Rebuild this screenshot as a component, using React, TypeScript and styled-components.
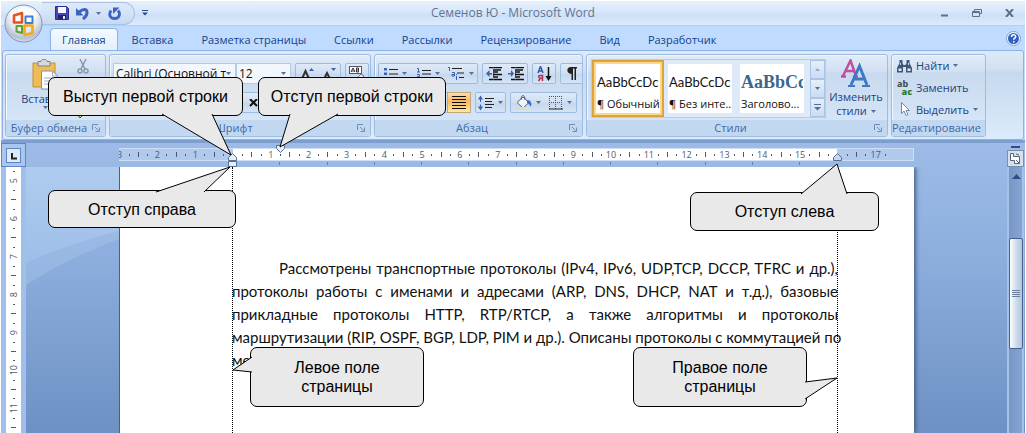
import React from 'react';
import styled, { createGlobalStyle, css } from 'styled-components';
import { Bold, Italic, Strikethrough, Underline } from 'lucide-react';

const Global = createGlobalStyle`
  *, *::before, *::after { box-sizing: border-box; }
  body { margin: 0; background: #fff; font-family: "Open Sans", "Noto Sans", sans-serif; font-size: 11px; color: #1f3f7f; }
  button, select { font: inherit; color: inherit; margin: 0; }
  svg { display: block; flex: none; }
`;

const ui = { line: '#9ebbe0', frame: '#8db2e3', navy: '#1f3f7f', label: '#3e6aaa' };

/* ---------- window ---------- */

const Window = styled.div`
  position: relative;
  display: flex;
  flex-direction: column;
  min-height: 100vh;
  margin: 0 1px;
  overflow: hidden;
  background: #bfdbff;
`;

const TitleBar = styled.header`
  display: grid;
  grid-template-columns: 1fr auto 1fr;
  align-items: center;
  height: 26px;
  border-top: 1px solid #fff;
  background: linear-gradient(#e6f0fc, #d9e8fb 40%, #cde0f8 60%, #dcebfd);
  border-bottom: 1px solid #b3d0f3;
`;

const QuickAccess = styled.div`
  display: flex;
  align-items: center;
  gap: 7px;
  padding-left: 41px;
`;

const QuickPill = styled.div`
  display: flex;
  align-items: center;
  gap: 7px;
  width: 93px;
  height: 23px;
  padding-left: 13px;
  border: 1px solid #a9c3e6;
  border-left: 0;
  border-radius: 0 12px 12px 0;
  background: linear-gradient(#dfeafa, #c7daf3);
`;

const PlainButton = styled.button`
  display: flex;
  align-items: center;
  justify-content: center;
  padding: 0;
  border: 0;
  background: none;
`;

const Title = styled.h1`
  margin: 0;
  font-size: 12px;
  line-height: 16px;
  font-weight: 400;
  color: #5e7491;
`;

const WindowButtons = styled.div`
  display: flex;
  justify-content: flex-end;
  gap: 16px;
  padding-right: 8px;
`;

const WindowButton = styled(PlainButton)`
  width: 16px;
  height: 16px;
`;

const Orb = styled.button`
  position: absolute;
  left: 3px;
  top: 4px;
  width: 39px;
  height: 39px;
  padding: 0;
  border: 0;
  background: none;
`;

const TabBar = styled.nav`
  display: flex;
  align-items: stretch;
  height: 25px;
  padding: 2px 4px 0 49px;
  background: #bfdbff;
`;

const Tab = styled.button<{ $active?: boolean }>`
  padding: 0 13px;
  border: 1px solid transparent;
  border-bottom: 0;
  border-radius: 4px 4px 0 0;
  background: none;
  font-size: 11px;
  line-height: 16px;
  color: #15428b;
  white-space: nowrap;
  ${p => p.$active && css`
    padding: 0 11px;
    border-color: ${ui.frame};
    background: linear-gradient(#f4f9ff, #e3eefb);
  `}
`;

const Help = styled(PlainButton)`
  margin-left: auto;
  width: 16px;
  height: 20px;
`;

/* ---------- ribbon ---------- */

const RibbonBar = styled.div`
  display: flex;
  gap: 3px;
  height: 90px;
  margin: -1px 1px 0;
  padding: 3px 2px 2px;
  border: 1px solid ${ui.frame};
  border-radius: 3px;
  background: linear-gradient(#dfeaf8, #cfdff2 22%, #c7d9ef 24%, #dcebfb);
`;

const GroupBox = styled.section<{ $w: number }>`
  display: flex;
  flex-direction: column;
  flex: 0 0 ${p => p.$w}px;
  border: 1px solid ${ui.line};
  border-radius: 3px;
  background: linear-gradient(#e2ecf8, #d2e0f2 20%, #c9daef 22%, #d9e8f9);
  box-shadow: inset 1px 1px 0 #eff6fd;
  overflow: hidden;
`;

const GroupBody = styled.div`
  flex: 1;
  display: flex;
  min-height: 0;
`;

const GroupFooter = styled.footer`
  display: flex;
  align-items: center;
  height: 16px;
  padding-right: 5px;
  background: #c2d8f0;
  color: ${ui.label};
  line-height: 14px;
`;

const GroupName = styled.span`
  flex: 1;
  text-align: center;
  white-space: nowrap;
`;

const Stack = styled.div`
  display: flex;
  flex-direction: column;
  gap: 8px;
  padding: 8px 3px 0;
`;

const Line = styled.div`
  display: flex;
  gap: 4px;
  height: 21px;
`;

const ButtonSet = styled.div`
  display: flex;
  border: 1px solid ${ui.line};
  border-radius: 2px;
  background: linear-gradient(#dfeaf7, #cfdef1 50%, #c5d7ee 52%, #d5e4f6);
  > * + * { border-left: 1px solid #b9cfea; }
`;

const Tool = styled.button<{ $w?: number; $on?: boolean }>`
  display: flex;
  align-items: center;
  justify-content: center;
  gap: 4px;
  width: ${p => p.$w ?? 22}px;
  padding: 0;
  border: 0;
  background: none;
  color: #111;
  ${p => p.$on && css`
    outline: 1px solid #c2a978;
    background: linear-gradient(#fbdbb0, #fdb85e 45%, #fdc770 60%, #fee9a0);
  `}
`;

const SelectBox = styled.div<{ $w: number }>`
  display: flex;
  align-items: center;
  width: ${p => p.$w}px;
  padding-right: 4px;
  border: 1px solid #b3cbe8;
  background: #f2f7fd;
`;

const Select = styled.select`
  flex: 1;
  min-width: 0;
  height: 19px;
  padding: 0 0 0 2px;
  border: 0;
  background: none;
  appearance: none;
  font-size: 12px;
  color: #111;
  overflow: hidden;
`;

const Combos = styled.div`
  display: flex;
`;

const BigButton = styled.button<{ $w: number; $inset?: number }>`
  display: flex;
  flex-direction: column;
  align-items: center;
  width: ${p => p.$w}px;
  padding: 4px 0 0 ${p => p.$inset ?? 0}px;
  border: 0;
  background: none;
  line-height: 14px;
  color: ${ui.navy};
`;

const BigLabel = styled.span`
  margin-top: 2px;
`;

const CaretLabel = styled.span`
  display: flex;
  align-items: center;
  gap: 4px;
`;

const SmallColumn = styled.div`
  display: flex;
  flex-direction: column;
  gap: 8px;
  padding: 4px 2px;
`;

const Gallery = styled.div`
  display: flex;
  height: 59px;
  margin: 4px 0 0 4px;
  border: 1px solid #b6cdea;
  background: #dfeaf8;
`;

const StyleCard = styled.button<{ $on?: boolean }>`
  display: flex;
  flex-direction: column;
  justify-content: flex-end;
  width: 72px;
  padding: 0 1px;
  border: 4px solid transparent;
  background: #fff padding-box;
  text-align: left;
  color: #111;
  overflow: hidden;
  ${p => p.$on && css`
    border: 2px solid #e0a23c;
    padding: 0 3px 2px;
    background: #fff;
    box-shadow: inset 0 0 0 2px #fbd98b;
  `}
`;

const Sample = styled.span<{ $heading?: boolean }>`
  width: 100%;
  font-family: Lato, sans-serif;
  font-size: 13px;
  line-height: 24px;
  white-space: nowrap;
  overflow: hidden;
  ${p => p.$heading && css`
    font-family: "Liberation Serif", serif;
    font-size: 18px;
    font-weight: 700;
    color: #3b6690;
  `}
`;

const StyleName = styled.span`
  line-height: 19px;
  white-space: nowrap;
`;

const Scroller = styled.div`
  display: flex;
  flex-direction: column;
  width: 15px;
  margin-left: 2px;
`;

const ScrollKey = styled(PlainButton)`
  flex: 1;
  border: 1px solid #a9c4e6;
  background: linear-gradient(#e6eff9, #cbdcf1);
`;

const EditList = styled.div`
  display: flex;
  flex-direction: column;
  padding-left: 5px;
`;

const EditButton = styled.button`
  display: flex;
  align-items: center;
  gap: 4px;
  height: 22px;
  padding: 0;
  border: 0;
  background: none;
  color: ${ui.navy};
`;

/* ---------- rulers and document ---------- */

const Workspace = styled.main`
  flex: 1;
  display: flex;
  border-top: 3px solid #7d9fd0;
  background: linear-gradient(#9dbbe6, #8fb0df 35%, #6d91c4);
`;

const LeftRail = styled.div`
  display: flex;
  flex-direction: column;
  width: 25px;
  background: #a0bfea;
`;

const TabSelector = styled.button`
  display: flex;
  align-items: center;
  justify-content: center;
  height: 24px;
  padding: 0;
  border: 1px solid #5f86c4;
  background: #a9c6ee;
`;

const VerticalRuler = styled.div`
  flex: 1 0 0;
  min-height: 0;
  margin: 0 5px;
  overflow: hidden;
  background: #fff;
`;

const VerticalScale = styled.div`
  margin-top: -10px;
`;

const VerticalCell = styled.div`
  display: grid;
  grid-template-rows: repeat(4, 1fr);
  place-items: center;
  height: 38px;
`;

const VerticalNumber = styled.span`
  writing-mode: vertical-rl;
  transform: rotate(180deg);
  font-size: 9px;
  line-height: 12px;
  color: #4b5a72;
`;

const Mark = styled.i<{ $w: number; $h: number }>`
  width: ${p => p.$w}px;
  height: ${p => p.$h}px;
  background: #4b5a72;
`;

const Desk = styled.div`
  position: relative;
  flex: 1;
  min-width: 0;
  display: flex;
  flex-direction: column;
  align-items: center;
`;

const Swoosh = styled.svg`
  position: absolute;
  left: 0;
  top: 24px;
`;

const PageWidth = styled.div`
  position: relative;
  width: 100%;
  max-width: 795px;
`;

const RulerArea = styled(PageWidth)`
  height: 24px;
  padding-top: 5px;
`;

const Ruler = styled.div`
  height: 13px;
  overflow: hidden;
  border: solid #cfe0f6;
  border-width: 1px 1px 1px 0;
  background: linear-gradient(90deg, #b0c9ec 114px, #fff 114px, #fff calc(100% - 76px), #b0c9ec calc(100% - 76px));
`;

const Scale = styled.div`
  display: grid;
  grid-template-columns: repeat(21, 1fr);
  width: 794px;
  height: 11px;
  margin-left: -23px;
`;

const ScaleCell = styled.div`
  display: grid;
  grid-template-columns: repeat(4, 1fr);
  place-items: center;
`;

const ScaleNumber = styled.span`
  font-size: 9px;
  line-height: 11px;
  color: #4b5a72;
`;

const TabStops = styled.div`
  display: grid;
  grid-template-columns: repeat(12, 1fr);
  width: 567px;
  height: 3px;
  margin: 1px 0 0 114px;
  > i { border-right: 1px solid #6480ad; }
`;

const IndentMarker = styled.svg<{ $x: number; $y: number }>`
  position: absolute;
  left: ${p => p.$x}px;
  top: ${p => p.$y}px;
`;

const Sheet = styled(PageWidth)`
  flex: 1;
  display: flex;
  padding: 0 76px 0 112px;
  border-left: 1px solid #47618d;
  background: #fff;
  box-shadow: 2px 0 4px #47618d;
  clip-path: inset(0 -8px 0 0);
`;

const TextArea = styled.article`
  flex: 1;
  min-width: 0;
  padding-top: 90px;
  border: dotted #000;
  border-width: 0 1px;
`;

const TextLine = styled.p<{ $indent?: boolean; $last?: boolean }>`
  margin: 0 -1px;
  padding-left: ${p => (p.$indent ? 47 : 0)}px;
  font-family: Lato, "Noto Sans", sans-serif;
  font-size: 15px;
  line-height: 23px;
  color: #111;
  white-space: nowrap;
  text-align-last: ${p => (p.$last ? 'left' : 'justify')};
`;

const ScrollRail = styled.div`
  display: flex;
  flex-direction: column;
  width: 18px;
  padding-right: 1px;
`;

const SplitHandle = styled.div`
  height: 5px;
  margin: 0 4px;
  border-bottom: 2px solid #2c4d87;
`;

const RulerToggle = styled(PlainButton)`
  height: 17px;
  margin-top: 2px;
  border: 1px solid #7a8fae;
  background: #d7e0ec;
`;

const ScrollTrack = styled.div`
  flex: 1;
  display: flex;
  flex-direction: column;
  align-items: center;
  padding: 7px 1px 0 2px;
  background: linear-gradient(90deg, #a5c3ea 2px, #7796c4 2px, #86a5d2 15px, #a5c3ea 15px);
`;

const Thumb = styled.div`
  display: flex;
  align-items: center;
  justify-content: center;
  width: 14px;
  height: 111px;
  margin-top: 59px;
  border: 1px solid #47618d;
  border-radius: 2px;
  background: linear-gradient(90deg, #fff, #cfdded 50%, #b3c6de);
`;

/* ---------- callouts ---------- */

const CalloutLayer = styled.div`
  position: absolute;
  left: 50%;
  top: 0;
  width: 1026px;
  margin-left: -513px;
  pointer-events: none;
`;

const CalloutBox = styled.div<{ $x: number; $y: number; $w: number; $h: number }>`
  position: absolute;
  left: ${p => p.$x}px;
  top: ${p => p.$y}px;
  width: ${p => p.$w}px;
  height: ${p => p.$h}px;
  display: flex;
  align-items: center;
  justify-content: center;
  border: 1px solid #000;
  border-radius: 7px;
  background: #e9e9e9;
  font-family: "Liberation Sans", Arial, sans-serif;
  font-size: 16px;
  line-height: 19px;
  text-align: center;
  color: #000;
  white-space: pre-line;
`;

const Tail = styled.svg`
  position: absolute;
  left: -1px;
  top: -1px;
  overflow: visible;
`;

type CalloutProps = { x: number; y: number; w: number; h: number; tail: string; children: string };

function Callout({ x, y, w, h, tail, children }: CalloutProps) {
  return (
    <CalloutBox $x={x} $y={y} $w={w} $h={h}>
      <Tail width={w} height={h} aria-hidden="true">
        <path d={tail} fill="#e9e9e9" stroke="#000" />
      </Tail>
      {children}
    </CalloutBox>
  );
}

/* ---------- icons ---------- */

const Caret = ({ c = '#54709c' }: { c?: string }) => (
  <svg width="5" height="3"><path d="M0 0h5L2.500 3z" fill={c} /></svg>
);

const Launcher = () => (
  <svg width="8" height="8" fill="none" stroke="#6c8cb9">
    <path d="M.5 6V.5H6M3 3l3.500 3.500M7.500 3.500v4h-4" />
  </svg>
);

const OfficeOrb = () => (
  <svg width="39" height="39" viewBox="0 0 39 39">
    <defs>
      <radialGradient id="orb" cx=".5" cy=".3" r=".75">
        <stop offset="0" stopColor="#fff" /><stop offset=".55" stopColor="#e3e8f0" />
        <stop offset=".8" stopColor="#b5bfd0" /><stop offset="1" stopColor="#eef3fa" />
      </radialGradient>
    </defs>
    <circle cx="19.500" cy="19.500" r="18.500" fill="url(#orb)" stroke="#8397b5" />
    <ellipse cx="19.500" cy="11" rx="14" ry="8" fill="#fff" opacity=".6" />
    <g fill="none" strokeWidth="2.600" strokeLinejoin="round">
      <path d="M10 11.500l8-2.500v9.500h-8z" stroke="#e5541b" />
      <path d="M21.500 12.500h7v6.500h-7z" stroke="#3f7fd0" strokeWidth="2" />
      <path d="M12.500 22h5.500v7l-5.500-1.500z" stroke="#5da331" strokeWidth="2" />
      <path d="M20.500 21.500h8v7.500l-8 2z" stroke="#f2a91c" />
    </g>
  </svg>
);

const SaveIcon = () => (
  <svg width="14" height="14">
    <path d="M.5.5h11l2 2v11H.5z" fill="#4646b4" stroke="#2e2e88" />
    <path d="M3 1h8v6H3z" fill="#f4f7ff" /><path d="M3 9h8v4.500H3z" fill="#23236e" /><path d="M8 10h2v3H8z" fill="#e3e8fa" />
  </svg>
);

const UndoIcon = () => (
  <svg width="13" height="13" fill="none" stroke="#3c63c4" strokeWidth="3">
    <path d="M3 5c5-4 8-3 8 .5 0 3-2 5-4 6.500" /><path d="M0 1v7.500h7.500z" fill="#3c63c4" stroke="none" />
  </svg>
);

const RedoIcon = () => (
  <svg width="13" height="13" fill="none" stroke="#3c63c4" strokeWidth="2.800">
    <path d="M10 3.500C13 7 11 11.500 6.500 11.500s-6-4-3.500-8" /><path d="M5 .5h6.500L5 7z" fill="#3c63c4" stroke="none" />
  </svg>
);

const HelpIcon = () => (
  <svg width="15" height="15">
    <circle cx="7.500" cy="7.500" r="7" fill="#f5f9ff" stroke="#7f9fd0" />
    <circle cx="7.500" cy="7.500" r="5.500" fill="#2f62c0" />
    <path d="M5.500 6c0-3 4.200-2.800 4.200-.3 0 1.400-2 1.500-2 3" fill="none" stroke="#fff" strokeWidth="1.500" />
    <path d="M7 10h1.500v1.500H7z" fill="#fff" />
  </svg>
);

const PasteIcon = () => (
  <svg width="27" height="31">
    <path d="M1 4h22v24H1z" fill="#f0bc58" stroke="#c98f2e" />
    <path d="M6 2.500h3c0-3 6-3 6 0h3V7H6z" fill="#d6d9df" stroke="#7c838f" />
    <path d="M9.500 12h11l5 5v13h-16z" fill="#fff" stroke="#7f8fae" />
    <path d="M20.500 12v5h5M12 19h10M12 22h10M12 25h10" fill="none" stroke="#9aabc9" />
  </svg>
);

const CutIcon = () => (
  <svg width="12" height="15" fill="none" stroke="#8a97ab" strokeWidth="1.500">
    <path d="M3 0l5 10M9 0L4 10" /><circle cx="3" cy="12" r="2" /><circle cx="9" cy="12" r="2" />
  </svg>
);

const CopyIcon = () => (
  <svg width="13" height="14" fill="#eef3fa" stroke="#8a97ab"><path d="M.5.5h7v9h-7zM5.500 4.500h7v9h-7z" /></svg>
);

const BrushIcon = () => (
  <svg width="14" height="14"><path d="M9 1l3 3-4 4-3-3z" fill="#d5a53c" /><path d="M4 6l4 4-4 4-3-4z" fill="#f3d58a" stroke="#5b4a1e" /></svg>
);

const BigA = ({ down }: { down?: boolean }) => (
  <svg width="15" height="14">
    <path d={down ? 'M1 14l4-8 4 8M2.500 12h5' : 'M1 14L5.500 4 10 14M3 11h5'} fill="none" stroke="#333" strokeWidth="2" />
    <path d={down ? 'M9 1h5l-2.500 3z' : 'M9 4h5l-2.500-3z'} fill="#3a62ac" />
  </svg>
);

const ClearFormat = () => (
  <svg width="16" height="16" fill="none" stroke="#333">
    <rect x=".5" y=".5" width="12" height="7" fill="#fff" stroke="#556" />
    <path d="M2 6l2-4 2 4M2.500 5h3M7.500 2v4h2V2zM7.500 4h2" /><path d="M8 12l4-4 3 2-4 5z" fill="#f1dfe9" stroke="#777" />
  </svg>
);

const Bullets = () => (
  <svg width="14" height="14">
    <path d="M0 1h3v2.500H0zM0 5.500h3V8H0zM0 10h3v2.500H0z" fill="#3a62ac" /><path d="M5 2.500h9M5 7h9M5 11.500h9" stroke="#222" />
  </svg>
);

const Numbering = () => (
  <svg width="14" height="14" fill="none">
    <path d="M0 1.500h1.500V5M0 5h3M0 7.500h2.500v2H.5v2H3" stroke="#3a62ac" /><path d="M5 3.500h9M5 7h9M5 10.500h9" stroke="#222" />
  </svg>
);

const Multilevel = () => (
  <svg width="17" height="15" fill="none">
    <path d="M0 1.500h1.500V5M4 6.500h2.500v3.500H4V8.500h2.500M8.500 10v4M8.500 8v1" stroke="#3a62ac" />
    <path d="M4 2.500h10M9 7h7M11 11.500h5" stroke="#222" />
  </svg>
);

const Indent = ({ right }: { right?: boolean }) => (
  <svg width="16" height="14">
    <path d="M3 .5h13M7 3h8M7 5h5M7 7.500h9M7 10h5M3 12.500h13" stroke="#111" strokeWidth="1.500" />
    <path d={right ? 'M0 6h3V3l3 3.500L3 10V7.500H0z' : 'M6 6H3.500V3L0 6.500 3.500 10V7.500H6z'} fill="#3a62ac" />
    <path d="M7.500 0v14" stroke="#444" strokeDasharray="1 1" />
  </svg>
);

const Sort = () => (
  <svg width="15" height="16" fill="none">
    <path d="M1 7l2.500-6.500L6 7M2 5h3" stroke="#3658a8" strokeWidth="1.500" />
    <path d="M5.500 15V9.500H3.200c-2 0-2 2.700 0 2.700H5.500M3.500 12L1.500 15" stroke="#a8344e" strokeWidth="1.500" />
    <path d="M11.500 1v12" stroke="#111" strokeWidth="1.500" /><path d="M8.500 10h6l-3 5z" fill="#111" />
  </svg>
);

const Pilcrow = () => (
  <svg width="10" height="13"><path d="M10 0v1.500H9V13H7.500V1.500H6V13H4.500V7C-1 7-1 0 4 0z" fill="#222" /></svg>
);

const AlignLines = ({ d }: { d: string }) => (
  <svg width="15" height="13"><path d={d} stroke="#111" fill="none" /></svg>
);

const LineSpacing = () => (
  <svg width="16" height="16">
    <path d="M2.500 3v4M2.500 9.500v4" stroke="#3a62ac" /><path d="M0 4.500h5l-2.500-4zM0 11.500h5l-2.500 4z" fill="#3a62ac" />
    <path d="M7 3.500h9M7 6.500h7M7 9.500h9M7 12.500h7" stroke="#222" />
  </svg>
);

const Bucket = () => (
  <svg width="17" height="15">
    <path d="M2 7.500L8 2l6 5.500-6 5.500z" fill="#f2f6fb" stroke="#56657e" /><path d="M6 5c0-6 4-6 4 0" fill="none" stroke="#56657e" />
    <path d="M12 5c4 0 5 3 4 7-1-2-2-3-4-4z" fill="#3a6bc0" /><path d="M0 13.500h14" stroke="#d9e2c0" strokeWidth="3" />
  </svg>
);

const Borders = () => (
  <svg width="14" height="14" fill="none">
    <path d="M.5 0v13M6.500 0v13M12.500 0v13M0 .5h13M0 6.500h13" stroke="#555" strokeDasharray="1 1" /><path d="M0 13h14" stroke="#222" />
  </svg>
);

const ChangeStyles = () => (
  <svg width="30" height="29" fill="none">
    <path d="M2 17L9.500 1.500 15 17M4.500 12h9M0 17.500h5M12 17.500h5" stroke="#c04fa2" strokeWidth="2.500" />
    <path d="M10 26l8.500-19L26 26M13 20h10" stroke="#3f79c6" strokeWidth="3" /><path d="M7 27h7M21 27h8" stroke="#3f79c6" strokeWidth="2" />
  </svg>
);

const Binoculars = () => (
  <svg width="15" height="14">
    <path d="M2.500 1h3v3l1 2h2l1-2V1h3v3L15 9v4.500H9V8H6v5.500H0V9l2.500-5z" fill="#3d5878" />
    <path d="M1.500 9.500h3v2.500h-3zM10.500 9.500h3v2.500h-3z" fill="#e1eaf6" /><path d="M3.500 4v2M11.500 4v2" stroke="#c7d8ee" />
  </svg>
);

const Swap = styled.span`
  display: grid;
  grid-template-columns: 15px;
  font-size: 9px;
  line-height: 8px;
  font-weight: 700;
  text-align: left;
  color: #444;
  > b { text-align: right; color: #2c7a35; }
`;

const Pointer = () => (
  <svg width="15" height="14"><path d="M4.500.5v11L7 9l2 4.500 2-1L9 8.500h3.500z" fill="#fff" stroke="#7487a6" /></svg>
);

/* ---------- parts ---------- */

type GroupProps = { name: string; width: number; launcher?: boolean; children: React.ReactNode };

function Group({ name, width, launcher, children }: GroupProps) {
  return (
    <GroupBox $w={width} aria-label={name}>
      <GroupBody>{children}</GroupBody>
      <GroupFooter>
        <GroupName>{name}</GroupName>
        {launcher && <PlainButton aria-label={name + ': параметры'}><Launcher /></PlainButton>}
      </GroupFooter>
    </GroupBox>
  );
}

const tabs = ['Главная', 'Вставка', 'Разметка страницы', 'Ссылки', 'Рассылки', 'Рецензирование', 'Вид', 'Разработчик'];
const scale = Array.from({ length: 21 }, (_, i) => i - 3);
const vertical = [5, 6, 7, 8, 9, 10, 11];

const paragraph = [
  'Рассмотрены транспортные протоколы (IPv4, IPv6, UDP,TCP, DCCP, TFRC и др.),',
  'протоколы работы с именами и адресами (ARP, DNS, DHCP, NAT и т.д.), базовые',
  'прикладные протоколы HTTP, RTP/RTCP, а также алгоритмы и протоколы',
  'маршрутизации (RIP, OSPF, BGP, LDP, PIM и др.). Описаны протоколы с коммутацией по',
  'ме',
];

export default function App() {
  return (
    <>
      <Global />
      <Window>
        <TitleBar>
          <QuickAccess>
            <QuickPill>
              <PlainButton aria-label="Сохранить"><SaveIcon /></PlainButton>
              <PlainButton aria-label="Отменить"><UndoIcon /></PlainButton>
              <Caret />
              <PlainButton aria-label="Повторить"><RedoIcon /></PlainButton>
            </QuickPill>
            <PlainButton aria-label="Настройка панели">
              <svg width="6" height="6"><path d="M0 .5h6" stroke="#2c4d87" /><path d="M0 2.500h6l-3 3z" fill="#2c4d87" /></svg>
            </PlainButton>
          </QuickAccess>
          <Title>Семенов Ю - Microsoft Word</Title>
          <WindowButtons>
            <WindowButton aria-label="Свернуть"><svg width="8" height="8"><path d="M0 6.500h7" stroke="#5c6f8d" strokeWidth="2" /></svg></WindowButton>
            <WindowButton aria-label="Восстановить">
              <svg width="10" height="8" fill="none" stroke="#5c6f8d"><path d="M2.500 2.500v-2h7v4h-2M.5 2.500h7v5h-7zM.5 3.500h7" /></svg>
            </WindowButton>
            <WindowButton aria-label="Закрыть"><svg width="9" height="8"><path d="M1 0l7 8M8 0L1 8" stroke="#5c6f8d" strokeWidth="2" /></svg></WindowButton>
          </WindowButtons>
        </TitleBar>

        <TabBar>
          {tabs.map((t, i) => <Tab key={t} $active={i === 0}>{t}</Tab>)}
          <Help aria-label="Справка"><HelpIcon /></Help>
        </TabBar>
        <Orb aria-label="Кнопка Office"><OfficeOrb /></Orb>

        <RibbonBar>
          <Group name="Буфер обмена" width={101} launcher>
            <BigButton $w={68} $inset={11}><PasteIcon /><BigLabel>Вставить</BigLabel><Caret /></BigButton>
            <SmallColumn>
              <PlainButton aria-label="Вырезать"><CutIcon /></PlainButton>
              <PlainButton aria-label="Копировать"><CopyIcon /></PlainButton>
              <PlainButton aria-label="Формат по образцу"><BrushIcon /></PlainButton>
            </SmallColumn>
          </Group>

          <Group name="Шрифт" width={262} launcher>
            <Stack>
              <Line>
                <Combos>
                  <SelectBox $w={123}>
                    <Select aria-label="Шрифт"><option>Calibri (Основной текст)</option></Select><Caret />
                  </SelectBox>
                  <SelectBox $w={55}>
                    <Select aria-label="Размер шрифта"><option>12</option></Select><Caret />
                  </SelectBox>
                </Combos>
                <ButtonSet>
                  <Tool aria-label="Увеличить размер"><BigA /></Tool>
                  <Tool aria-label="Уменьшить размер"><BigA down /></Tool>
                </ButtonSet>
                <ButtonSet><Tool aria-label="Очистить формат"><ClearFormat /></Tool></ButtonSet>
              </Line>
              <Line>
                <ButtonSet>
                  <Tool $w={28} aria-label="Полужирный"><Bold size={12} /></Tool>
                  <Tool $w={28} aria-label="Курсив"><Italic size={12} /></Tool>
                  <Tool $w={32} aria-label="Подчеркнутый"><Underline size={12} /><Caret /></Tool>
                  <Tool $w={28} aria-label="Зачеркнутый"><Strikethrough size={12} /></Tool>
                  <Tool $w={48} aria-label="Подстрочный знак">
                    <svg width="10" height="8"><path d="M1 0l7 7M8 0L1 7" stroke="#111" strokeWidth="2" /></svg>
                  </Tool>
                </ButtonSet>
              </Line>
            </Stack>
          </Group>

          <Group name="Абзац" width={209} launcher>
            <Stack>
              <Line>
                <ButtonSet>
                  <Tool $w={33} aria-label="Маркеры"><Bullets /><Caret /></Tool>
                  <Tool $w={33} aria-label="Нумерация"><Numbering /><Caret /></Tool>
                  <Tool $w={32} aria-label="Многоуровневый список"><Multilevel /><Caret /></Tool>
                </ButtonSet>
                <ButtonSet>
                  <Tool aria-label="Уменьшить отступ"><Indent /></Tool>
                  <Tool aria-label="Увеличить отступ"><Indent right /></Tool>
                </ButtonSet>
                <ButtonSet><Tool aria-label="Сортировка"><Sort /></Tool></ButtonSet>
                <ButtonSet><Tool aria-label="Знаки абзаца"><Pilcrow /></Tool></ButtonSet>
              </Line>
              <Line>
                <ButtonSet>
                  <Tool $w={23} aria-label="По левому краю"><AlignLines d="M0 1.500h14M0 4.500h9M0 7.500h14M0 10.500h9" /></Tool>
                  <Tool $w={23} aria-label="По центру"><AlignLines d="M0 1.500h14M3 4.500h9M0 7.500h14M3 10.500h9" /></Tool>
                  <Tool $w={23} aria-label="По правому краю"><AlignLines d="M0 1.500h14M5 4.500h9M0 7.500h14M5 10.500h9" /></Tool>
                  <Tool $on aria-label="По ширине"><AlignLines d="M0 .5h14M0 3.500h14M0 6.500h14M0 9.500h14M0 12.500h14" /></Tool>
                </ButtonSet>
                <ButtonSet><Tool $w={29} aria-label="Интервал"><LineSpacing /><Caret /></Tool></ButtonSet>
                <ButtonSet>
                  <Tool $w={33} aria-label="Заливка"><Bucket /><Caret /></Tool>
                  <Tool $w={32} aria-label="Границы"><Borders /><Caret /></Tool>
                </ButtonSet>
              </Line>
            </Stack>
          </Group>

          <Group name="Стили" width={302} launcher>
            <Gallery>
              <StyleCard $on><Sample>AaBbCcDc</Sample><StyleName>¶ Обычный</StyleName></StyleCard>
              <StyleCard><Sample>AaBbCcDc</Sample><StyleName>¶ Без инте...</StyleName></StyleCard>
              <StyleCard><Sample $heading>AaBbCc</Sample><StyleName>Заголово...</StyleName></StyleCard>
              <Scroller>
                <ScrollKey aria-label="Вверх"><svg width="5" height="3"><path d="M0 3h5L2.500 0z" fill="#9aa9bf" /></svg></ScrollKey>
                <ScrollKey aria-label="Вниз"><Caret /></ScrollKey>
                <ScrollKey aria-label="Все стили"><svg width="7" height="7"><path d="M0 .5h7" stroke="#54709c" /><path d="M0 3h7L3.500 6.500z" fill="#54709c" /></svg></ScrollKey>
              </Scroller>
            </Gallery>
            <BigButton $w={60}>
              <ChangeStyles />
              <BigLabel>Изменить</BigLabel>
              <CaretLabel>стили<Caret /></CaretLabel>
            </BigButton>
          </Group>

          <Group name="Редактирование" width={95}>
            <EditList>
              <EditButton><Binoculars />Найти<Caret /></EditButton>
              <EditButton><Swap aria-hidden="true">ab<b>ac</b></Swap>Заменить</EditButton>
              <EditButton><Pointer />Выделить<Caret /></EditButton>
            </EditList>
          </Group>
        </RibbonBar>

        <Workspace>
          <LeftRail>
            <TabSelector aria-label="Тип табуляции">
              <svg width="15" height="15">
                <rect x=".5" y=".5" width="14" height="14" fill="#dfeaf8" stroke="#5f86c4" />
                <path d="M6 5v5.500h5" fill="none" stroke="#222" strokeWidth="2" />
              </svg>
            </TabSelector>
            <VerticalRuler>
              <VerticalScale>
                {vertical.map(n => (
                  <VerticalCell key={n}>
                    <Mark $w={5} $h={1} /><Mark $w={2} $h={1} /><VerticalNumber>{n}</VerticalNumber><Mark $w={2} $h={1} />
                  </VerticalCell>
                ))}
                <VerticalCell><Mark $w={5} $h={1} /><Mark $w={2} $h={1} /></VerticalCell>
              </VerticalScale>
            </VerticalRuler>
          </LeftRail>

          <Desk>
            <Swoosh width="93" height="266" aria-hidden="true">
              <defs>
                <linearGradient id="sky" x1="0" y1="0" x2="0" y2="1">
                  <stop offset="0" stopColor="#b4d1f2" /><stop offset="1" stopColor="#a3c3ec" />
                </linearGradient>
              </defs>
              <path d="M0 0h93v64Q40 78 0 96z" fill="url(#sky)" opacity=".8" />
              <path d="M0 96Q40 78 93 64v8Q40 92 0 118z" fill="#a3c2ea" opacity=".5" />
            </Swoosh>
            <RulerArea>
              <Ruler>
                <Scale>
                  {scale.map(n => (
                    <ScaleCell key={n}>
                      <Mark $w={1} $h={5} /><Mark $w={1} $h={2} />
                      <ScaleNumber>{n === 0 || n === 16 ? '' : Math.abs(n)}</ScaleNumber>
                      <Mark $w={1} $h={2} />
                    </ScaleCell>
                  ))}
                </Scale>
              </Ruler>
              <TabStops>{Array.from({ length: 12 }, (_, i) => <i key={i} />)}</TabStops>
              <IndentMarker $x={157} $y={2} width="9" height="8"><path d="M.5.5h8v3l-4 4-4-4z" fill="#e6eefa" stroke="#5b6f93" /></IndentMarker>
              <IndentMarker $x={109} $y={10} width="9" height="14">
                <path d="M.5 7.500v-3l4-4 4 4v3zM.5 8.500h8v5h-8z" fill="#e6eefa" stroke="#5b6f93" />
              </IndentMarker>
              <IndentMarker $x={714} $y={10} width="9" height="8"><path d="M.5 7.500v-3l4-4 4 4v3z" fill="#c3d6ee" stroke="#5b6f93" /></IndentMarker>
            </RulerArea>
            <Sheet>
              <TextArea>
                {paragraph.map((line, i) => (
                  <TextLine key={line} $indent={i === 0} $last={i === paragraph.length - 1}>{line}</TextLine>
                ))}
              </TextArea>
            </Sheet>
          </Desk>

          <ScrollRail>
            <SplitHandle />
            <RulerToggle aria-label="Линейка">
              <svg width="13" height="13" fill="#fff" stroke="#56657e"><path d="M1.500 1.500h3v3h6v7h-5v-3h-4zM7 2l3 1M7 8l3 3" /></svg>
            </RulerToggle>
            <ScrollTrack>
              <svg width="9" height="5"><path d="M0 5h9L4.500 0z" fill="#2c4d87" /></svg>
              <Thumb><svg width="8" height="8"><path d="M0 .5h8M0 2.500h8M0 4.500h8M0 6.500h8" stroke="#6c7f9c" /></svg></Thumb>
            </ScrollTrack>
          </ScrollRail>
        </Workspace>

        <CalloutLayer>
          <Callout x={48} y={77} w={195} h={39} tail="M114 37L183 78L164 37">Выступ первой строки</Callout>
          <Callout x={258} y={77} w={188} h={39} tail="M32 37L22 70L80 37">Отступ первой строки</Callout>
          <Callout x={48} y={190} w={188} h={38} tail="M108 2L182 -23L156 2">Отступ справа</Callout>
          <Callout x={690} y={192} w={189} h={39} tail="M111 2L147 -28L157 2">Отступ слева</Callout>
          <Callout x={250} y={347} w={174} h={60} tail="M2 10L-17 23L2 25">{'Левое поле\nстраницы'}</Callout>
          <Callout x={633} y={347} w={174} h={60} tail="M172 35L204 31L172 52">{'Правое поле\nстраницы'}</Callout>
        </CalloutLayer>
      </Window>
    </>
  );
}
